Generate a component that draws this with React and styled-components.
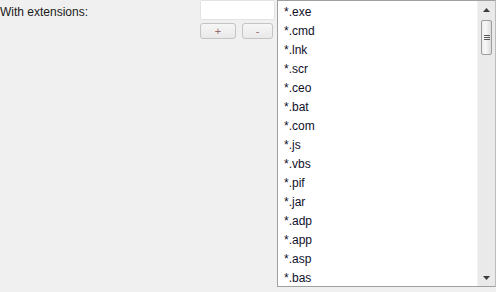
import React from "react";
import styled, { createGlobalStyle } from "styled-components";

const extensions = [
  "*.exe", "*.cmd", "*.lnk", "*.scr", "*.ceo", "*.bat", "*.com", "*.js",
  "*.vbs", "*.pif", "*.jar", "*.adp", "*.app", "*.asp", "*.bas",
];

const Global = createGlobalStyle`
  html, body {
    margin: 0;
    padding: 0;
    background: #f0f0f0;
    font-family: "Liberation Sans", Arial, sans-serif;
    font-size: 12px;
    color: #000;
  }
`;

const Page = styled.div`
  display: flex;
  width: 496px;
  height: 292px;
  overflow: hidden;
`;

const Label = styled.div`
  width: 200px;
  padding-top: 5px;
  line-height: 14px;
  color: #1a1a1a;
`;

const Editor = styled.div`
  width: 77px;
  display: flex;
  flex-direction: column;
`;

const TextBox = styled.div`
  width: 75px;
  height: 20px;
  box-sizing: border-box;
  background: #fff;
  border: 1px solid #e3e3e3;
  border-radius: 2px;
`;

const ButtonRow = styled.div`
  display: flex;
  gap: 6px;
  margin-top: 3px;
`;

const Button = styled.button`
  width: ${(p) => p.$w}px;
  height: 16px;
  box-sizing: border-box;
  padding: 0;
  border: 1px solid #c4c4c4;
  border-radius: 3px;
  background: linear-gradient(#f6f6f6, #e9e9e9);
  color: #9a6a6a;
  font-family: "Liberation Sans", Arial, sans-serif;
  font-size: 11px;
  line-height: 12px;
`;

const ListBox = styled.div`
  width: 219px;
  height: 287px;
  box-sizing: border-box;
  border: 1px solid #a0a0a0;
  border-right-color: #bdbdbd;
  background: #fff;
  display: flex;
`;

const Items = styled.ul`
  flex: 1;
  margin: 0;
  padding: 2px 0 0 0;
  list-style: none;
`;

const Item = styled.li`
  height: 19px;
  line-height: 19px;
  padding-left: 6px;
  color: #10102a;
`;

const ScrollBar = styled.div`
  width: 17px;
  background: #eaeaea;
  border-left: 1px solid #f2f2f2;
  display: flex;
  flex-direction: column;
  align-items: center;
`;

const Arrow = styled.div`
  height: 17px;
  width: 100%;
  display: flex;
  align-items: center;
  justify-content: center;
`;

const Thumb = styled.div`
  width: 11px;
  height: 35px;
  margin-top: 2px;
  box-sizing: border-box;
  border: 1px solid #9d9d9d;
  border-radius: 2px;
  background: linear-gradient(90deg, #ececec, #f8f8f8 40%, #dcdcdc);
  display: flex;
  flex-direction: column;
  align-items: center;
  justify-content: center;
  gap: 1px;
`;

const Grip = styled.span`
  width: 6px;
  height: 1px;
  background: #555;
`;

const Spacer = styled.div`
  flex: 1;
`;

const Tri = ({ down }) => (
  <svg width="7" height="4" viewBox="0 0 7 4">
    <polygon
      points={down ? "0,0 7,0 3.5,4" : "3.5,0 7,4 0,4"}
      fill="#3c3c3c"
    />
  </svg>
);

export default function App() {
  return (
    <Page>
      <Global />
      <Label>With extensions:</Label>
      <Editor>
        <TextBox />
        <ButtonRow>
          <Button $w={36}>+</Button>
          <Button $w={31}>-</Button>
        </ButtonRow>
      </Editor>
      <ListBox>
        <Items>
          {extensions.map((e) => (
            <Item key={e}>{e}</Item>
          ))}
        </Items>
        <ScrollBar>
          <Arrow>
            <Tri />
          </Arrow>
          <Thumb>
            <Grip />
            <Grip />
            <Grip />
          </Thumb>
          <Spacer />
          <Arrow>
            <Tri down />
          </Arrow>
        </ScrollBar>
      </ListBox>
    </Page>
  );
}
